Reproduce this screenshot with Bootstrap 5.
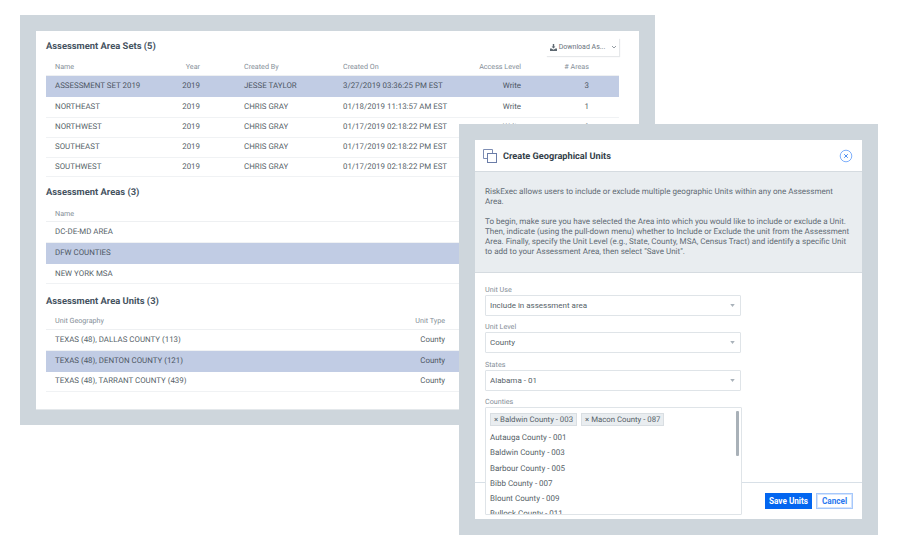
<!DOCTYPE html>
<html lang="en">
<head>
<meta charset="utf-8">
<title>Assessment Areas</title>
<link href="https://cdn.jsdelivr.net/npm/bootstrap@5.3.0/dist/css/bootstrap.min.css" rel="stylesheet">
<style>
html,body{margin:0;height:100%;background:#fff;font-family:Roboto,"Liberation Sans",sans-serif;color:#4f5a64;overflow:hidden;text-rendering:geometricPrecision}
.stage{position:relative;width:900px;height:552px}
.win{position:absolute;background:#ced6dc;padding:16px}
.win-back{left:20px;top:15px;width:635px;height:410px}
.win-front{left:459px;top:124px;width:419px;height:411px}
.sheet{background:#fff;height:100%;display:flex;flex-direction:column}
.win-back .sheet{padding:0 20px 0 10px;box-shadow:0 1px 0 #e4e8eb}
.sec-title{font-size:9.4px;font-weight:700;color:#45535f;line-height:12px;margin:0}
.top-head{height:29px}
.top-head .sec-title{margin-top:3px}
.dl-btn{width:73px;height:18px;margin-top:3px;padding:0 0 0 2px;border:0;border-radius:0;background:#fff;box-shadow:1px 1px 1px #e6e8ea;color:#6a747d;font-size:7px;line-height:18px;display:flex;align-items:center;justify-content:center;gap:2px}
.geo-table{margin:0;table-layout:fixed;width:573px;font-size:7.9px;color:#565f68}
.geo-table>:not(caption)>*>*{padding:0 9px;border-bottom:1px solid #f0f2f4;vertical-align:middle;background:transparent;color:inherit;line-height:10px;white-space:nowrap}
.geo-table>thead>tr>th{font-weight:400;font-size:7.2px;color:#848e97;height:15px;border-bottom:1px solid #eef0f2}
.geo-table>tbody{border-top:0!important}
.rh-21>td{height:21px}
.rh-20>td{height:20px}
.rh-19>td{height:19px}
.geo-table>tbody>tr.picked>td{background:#c1cce4;border-bottom-color:#c1cce4;color:#4d5663}
.gap-by{padding-left:35px!important}
.gap-on{padding-left:9px!important}
.sec-gap-a{margin-top:10px;margin-bottom:8px}
.sec-gap-b{margin-top:12px;margin-bottom:6px}
.modal-top{height:32px;border-bottom:1px solid #d5dbe0;padding:0 9px 0 8px;gap:6px}
.modal-name{font-size:9.2px;font-weight:700;color:#343f49;margin:0;padding-top:2px}
.shut{margin-left:auto;width:14px;height:14px;padding:0;border:0;background:none;display:flex}
.intro{background:#e9edf0;height:101px;border-bottom:1px solid #d5dbe0;padding:15px 10px 0;font-size:8.05px;line-height:10px;color:#616b74}
.intro p{margin:0 0 10px}
.form-zone{height:209px;padding:12px 0 0 10px;position:relative}
.f-label{display:block;font-size:7.2px;line-height:9px;color:#848e97;margin:0 0 1px}
.f-sel{width:256px;height:21px;min-height:0;padding:0 20px 0 4px;font-size:8px;line-height:19px;color:#565f68;border:1px solid #dfe4e8;border-radius:1px;margin-bottom:6.400px;box-shadow:none;background-size:5px 3px;background-position:right 5px center;background-image:url("data:image/svg+xml,%3Csvg xmlns='http://www.w3.org/2000/svg' viewBox='0 0 6 4'%3E%3Cpath fill='%23a9b2ba' d='M0 0h6L3 4z'/%3E%3C/svg%3E")}
.multi-box{position:relative;z-index:2;width:257px;height:108px;background:#fff;border:1px solid #dfe4e8;border-radius:1px;overflow:hidden;padding:5px 0 0 4px}
.tag-row{display:flex;gap:4px;height:13px;margin-bottom:4px}
.geo-tag{background:#e9edf0;border:1px solid #d9dee2;font-size:7.8px;line-height:12px;color:#565f68;padding:0 3px;white-space:nowrap}
.opt-list{margin:0;padding:0;list-style:none;font-size:8px;line-height:15.2px;color:#565f68}
.thumb{position:absolute;right:2px;top:3px;width:3px;height:45px;background:#a9b1b8;border-radius:1px}
.modal-foot{height:37px;border-top:1px solid #d8e0e7;padding:10px 9px 0 0;gap:4px;justify-content:flex-end}
.modal-foot .btn{height:16px;padding:0;font-size:8.2px;font-weight:700;border-radius:0;line-height:14px}
.go-btn{width:47px;background:#0366f0;border:1px solid #0366f0;color:#fff}
.no-btn{width:37px;background:#fff;border:1px solid #a6c8fb;color:#2a78f0;box-shadow:inset 0 0 0 1px #d5e4fc}
</style>
</head>
<body>
<div class="stage">
  <section class="win win-back">
    <div class="sheet">
      <div class="d-flex justify-content-between align-items-center top-head">
        <h2 class="sec-title">Assessment Area Sets (5)</h2>
        <button class="btn dl-btn" type="button">
          <svg width="7" height="7" viewBox="0 0 8 8" aria-hidden="true"><path fill="#5d6871" d="M3.200 0h1.600v2.800H6.200L4 5.200 1.800 2.800h1.400zM0 5.200h1.800L4 6.600l2.200-1.400H8V8H0z"/></svg>
          <span>Download As...</span>
          <svg width="6" height="6" viewBox="0 0 6 6" class="ms-1" aria-hidden="true"><path fill="none" stroke="#7a848d" stroke-width=".8" d="M1 2l2 2 2-2"/></svg>
        </button>
      </div>
      <table class="table geo-table">
        <colgroup><col style="width:124px"><col style="width:39px"><col style="width:125px"><col style="width:136px"><col style="width:60px"><col style="width:68px"><col style="width:21px"></colgroup>
        <thead><tr><th>Name</th><th class="text-end">Year</th><th class="gap-by">Created By</th><th class="gap-on">Created On</th><th class="text-end">Access Level</th><th class="text-end"># Areas</th><th></th></tr></thead>
        <tbody>
          <tr class="rh-21 picked"><td>ASSESSMENT SET 2019</td><td class="text-end">2019</td><td class="gap-by">JESSE TAYLOR</td><td>3/27/2019 03:36:25 PM EST</td><td class="text-end">Write</td><td class="text-end">3</td><td></td></tr>
          <tr class="rh-21"><td>NORTHEAST</td><td class="text-end">2019</td><td class="gap-by">CHRIS GRAY</td><td>01/18/2019 11:13:57 AM EST</td><td class="text-end">Write</td><td class="text-end">1</td><td></td></tr>
          <tr class="rh-20"><td>NORTHWEST</td><td class="text-end">2019</td><td class="gap-by">CHRIS GRAY</td><td>01/17/2019 02:18:22 PM EST</td><td class="text-end">Write</td><td class="text-end">1</td><td></td></tr>
          <tr class="rh-20"><td>SOUTHEAST</td><td class="text-end">2019</td><td class="gap-by">CHRIS GRAY</td><td>01/17/2019 02:18:22 PM EST</td><td class="text-end">Write</td><td class="text-end">1</td><td></td></tr>
          <tr class="rh-19"><td>SOUTHWEST</td><td class="text-end">2019</td><td class="gap-by">CHRIS GRAY</td><td>01/17/2019 02:18:22 PM EST</td><td class="text-end">Write</td><td class="text-end">1</td><td></td></tr>
        </tbody>
      </table>
      <h2 class="sec-title sec-gap-a">Assessment Areas (3)</h2>
      <table class="table geo-table">
        <thead><tr><th>Name</th></tr></thead>
        <tbody>
          <tr class="rh-21"><td>DC-DE-MD AREA</td></tr>
          <tr class="rh-21 picked"><td>DFW COUNTIES</td></tr>
          <tr class="rh-20"><td>NEW YORK MSA</td></tr>
        </tbody>
      </table>
      <h2 class="sec-title sec-gap-b">Assessment Area Units (3)</h2>
      <table class="table geo-table">
        <colgroup><col style="width:300px"><col style="width:108px"><col style="width:165px"></colgroup>
        <thead><tr><th>Unit Geography</th><th class="text-end">Unit Type</th><th></th></tr></thead>
        <tbody>
          <tr class="rh-21"><td>TEXAS (48), DALLAS COUNTY (113)</td><td class="text-end">County</td><td></td></tr>
          <tr class="rh-21 picked"><td>TEXAS (48), DENTON COUNTY (121)</td><td class="text-end">County</td><td></td></tr>
          <tr class="rh-20"><td>TEXAS (48), TARRANT COUNTY (439)</td><td class="text-end">County</td><td></td></tr>
        </tbody>
      </table>
    </div>
  </section>

  <section class="win win-front">
    <div class="sheet">
      <div class="d-flex align-items-center modal-top">
        <svg width="14" height="14" viewBox="0 0 14 14" aria-hidden="true"><path fill="none" stroke="#7d8db3" stroke-width="1" d="M4.500 9.500H.5V.5h9v4"/><rect x="4.500" y="4.500" width="9" height="9" fill="#fff" stroke="#6b7da8"/></svg>
        <h1 class="modal-name">Create Geographical Units</h1>
        <button class="shut" type="button" aria-label="Close">
          <svg width="14" height="14" viewBox="0 0 14 14" aria-hidden="true"><circle cx="7" cy="7" r="5.800" fill="none" stroke="#7fb0fb" stroke-width="1"/><path stroke="#4f8ff0" stroke-width="1" d="M5.200 5.200l3.600 3.600M8.800 5.200l-3.600 3.600"/></svg>
        </button>
      </div>
      <div class="intro">
        <p>RiskExec allows users to include or exclude multiple geographic Units within any one Assessment Area.</p>
        <p>To begin, make sure you have selected the Area into which you would like to include or exclude a Unit. Then, indicate (using the pull-down menu) whether to Include or Exclude the unit from the Assessment Area. Finally, specify the Unit Level (e.g., State, County, MSA, Census Tract) and identify a specific Unit to add to your Assessment Area, then select "Save Unit".</p>
      </div>
      <div class="form-zone">
        <label class="f-label">Unit Use</label>
        <select class="form-select f-sel"><option>Include in assessment area</option></select>
        <label class="f-label">Unit Level</label>
        <select class="form-select f-sel"><option>County</option></select>
        <label class="f-label">States</label>
        <select class="form-select f-sel"><option>Alabama - 01</option></select>
        <label class="f-label">Counties</label>
        <div class="multi-box">
          <div class="tag-row">
            <span class="geo-tag">× Baldwin County - 003</span>
            <span class="geo-tag">× Macon County - 087</span>
          </div>
          <ul class="opt-list">
            <li>Autauga County - 001</li>
            <li>Baldwin County - 003</li>
            <li>Barbour County - 005</li>
            <li>Bibb County - 007</li>
            <li>Blount County - 009</li>
            <li>Bullock County - 011</li>
          </ul>
          <div class="thumb"></div>
        </div>
      </div>
      <div class="d-flex modal-foot">
        <button class="btn go-btn" type="button">Save Units</button>
        <button class="btn no-btn" type="button">Cancel</button>
      </div>
    </div>
  </section>
</div>
<script src="https://cdn.jsdelivr.net/npm/bootstrap@5.3.0/dist/js/bootstrap.bundle.min.js"></script>
</body>
</html>
